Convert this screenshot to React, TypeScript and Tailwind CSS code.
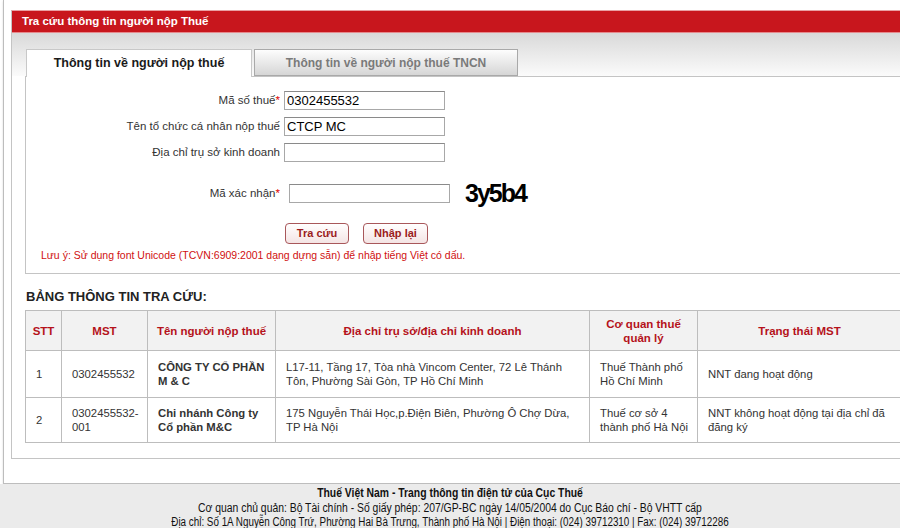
import React from 'react';

const rows = [
  {
    stt: '1',
    mst: ['0302455532'],
    name: ['CÔNG TY CỔ PHẦN', 'M & C'],
    addr: ['L17-11, Tầng 17, Tòa nhà Vincom Center, 72 Lê Thánh', 'Tôn, Phường Sài Gòn, TP Hồ Chí Minh'],
    cq: ['Thuế Thành phố', 'Hồ Chí Minh'],
    tt: ['NNT đang hoạt động'],
    h: 'h-[47px]',
  },
  {
    stt: '2',
    mst: ['0302455532-', '001'],
    name: ['Chi nhánh Công ty', 'Cổ phần M&C'],
    addr: ['175 Nguyễn Thái Học,p.Điện Biên, Phường Ô Chợ Dừa,', 'TP Hà Nội'],
    cq: ['Thuế cơ sở 4', 'thành phố Hà Nội'],
    tt: ['NNT không hoạt động tại địa chỉ đã', 'đăng ký'],
    h: 'h-[45px]',
  },
];

function Lines({ items }: { items: string[] }) {
  return (
    <>
      {items.map((t, i) => (
        <span key={i} className="block whitespace-nowrap">
          {t}
        </span>
      ))}
    </>
  );
}

function Field({ label, req, value, wide }: { label: string; req?: boolean; value?: string; wide?: boolean }) {
  return (
    <div className="flex items-center h-[19px]">
      <div className="w-[254px] text-right text-[11.5px] text-[#333]">
        {label}
        {req && <span className="text-[#d00]">*</span>}
      </div>
      <input
        readOnly
        defaultValue={value}
        className={`${wide ? 'ml-[9px]' : 'ml-[4px]'} w-[161px] h-[19px] border border-[#a8a8a8] border-t-[#8a8a8a] bg-white px-[2px] text-[13px] text-black outline-none`}
      />
    </div>
  );
}

export default function App() {
  return (
    <div className="w-[900px] h-[528px] overflow-hidden bg-white text-[#333] font-['Liberation_Sans',Arial,sans-serif]">
      <div className="ml-[3px] w-[960px] h-[484px] border-l border-b border-[#bdbdbd] pl-[7px] pt-[10px] shadow-[0_1px_2px_rgba(0,0,0,0.15)]">
        <div className="w-[920px] h-[449px] border border-[#c4c4c4] border-t-[#e9a0a3] bg-white">
          {/* red title bar */}
          <div className="h-[22px] bg-[#c8161d] border-b border-[#e58a8d] flex items-center pl-[10px] text-[11.5px] font-bold text-white">
            Tra cứu thông tin người nộp Thuế
          </div>

          {/* tabs */}
          <div className="h-[43px] bg-gradient-to-b from-[#d9d9d9] to-[#fbfbfb] flex items-end pl-[14px]">
            <div className="relative z-10 -mb-px w-[226px] h-[28px] bg-white border border-b-0 border-[#c8c8c8] flex items-center justify-center text-[12.5px] font-bold text-[#1a1a1a]">
              Thông tin về người nộp thuế
            </div>
            <div className="ml-[2px] w-[264px] h-[27px] bg-gradient-to-b from-[#fdfdfd] to-[#d6d6d6] border border-[#a9a9a9] flex items-center justify-center text-[12px] font-bold text-[#7a7a7a]">
              Thông tin về người nộp thuế TNCN
            </div>
          </div>

          {/* form */}
          <div className="ml-[13px] w-[900px] h-[198px] border border-[#c4c4c4] pt-[14px]">
            <div className="flex flex-col gap-[7px]">
              <Field label="Mã số thuế" req value="0302455532" />
              <Field label="Tên tổ chức cá nhân nộp thuế" value="CTCP MC" />
              <Field label="Địa chỉ trụ sở kinh doanh" />
            </div>
            <div className="mt-[19px] flex items-center">
              <Field label="Mã xác nhận" req wide />
              <span className="ml-[15px] text-[25px] font-bold tracking-[-2px] text-black leading-none">3y5b4</span>
            </div>
            <div className="mt-[17px] pl-[259px] flex gap-[14px]">
              <button className="w-[64px] h-[21px] rounded-[4px] border border-[#a8575a] bg-gradient-to-b from-white to-[#f4e4e4] text-[11px] font-bold text-[#9b1c20]">
                Tra cứu
              </button>
              <button className="w-[65px] h-[21px] rounded-[4px] border border-[#a8575a] bg-gradient-to-b from-white to-[#f4e4e4] text-[11px] font-bold text-[#9b1c20]">
                Nhập lại
              </button>
            </div>
            <p className="mt-[4px] pl-[15px] text-[10.5px] text-[#d01010]">
              Lưu ý: Sử dụng font Unicode (TCVN:6909:2001 dạng dựng sẵn) để nhập tiếng Việt có dấu.
            </p>
          </div>

          {/* results */}
          <h3 className="ml-[14px] mt-[13px] mb-[4px] text-[13px] font-bold text-[#222] leading-[19px]">
            BẢNG THÔNG TIN TRA CỨU:
          </h3>
          <table className="ml-[13px] w-[876px] table-fixed border-collapse text-[11.3px] leading-[14px]">
            <colgroup>
              <col className="w-[36px]" />
              <col className="w-[86px]" />
              <col className="w-[128px]" />
              <col className="w-[314px]" />
              <col className="w-[108px]" />
              <col className="w-[204px]" />
            </colgroup>
            <thead>
              <tr className="h-[40px] bg-[#f2f2f2] text-[#b5121b] font-bold text-[11.5px]">
                <th className="border border-[#bdbdbd] text-center">STT</th>
                <th className="border border-[#bdbdbd] text-center">MST</th>
                <th className="border border-[#bdbdbd] text-center">Tên người nộp thuế</th>
                <th className="border border-[#bdbdbd] text-center">Địa chỉ trụ sở/địa chỉ kinh doanh</th>
                <th className="border border-[#bdbdbd] text-center">
                  Cơ quan thuế
                  <br />
                  quản lý
                </th>
                <th className="border border-[#bdbdbd] text-center">Trạng thái MST</th>
              </tr>
            </thead>
            <tbody className="text-[#333]">
              {rows.map((r) => (
                <tr key={r.stt} className={r.h}>
                  <td className="border border-[#bdbdbd] px-[10px] align-middle">{r.stt}</td>
                  <td className="border border-[#bdbdbd] px-[10px] align-middle">
                    <Lines items={r.mst} />
                  </td>
                  <td className="border border-[#bdbdbd] px-[10px] align-middle font-bold">
                    <Lines items={r.name} />
                  </td>
                  <td className="border border-[#bdbdbd] px-[10px] align-middle">
                    <Lines items={r.addr} />
                  </td>
                  <td className="border border-[#bdbdbd] px-[10px] align-middle">
                    <Lines items={r.cq} />
                  </td>
                  <td className="border border-[#bdbdbd] px-[10px] align-middle">
                    <Lines items={r.tt} />
                  </td>
                </tr>
              ))}
            </tbody>
          </table>
        </div>
      </div>

      {/* footer */}
      <div className="h-[44px] bg-[#ebebeb] pt-[2px] text-center text-[12px] leading-[14.5px] text-[#111]">
        <div className="font-bold scale-x-[0.865]">Thuế Việt Nam - Trang thông tin điện tử của Cục Thuế</div>
        <div className="scale-x-[0.865]">Cơ quan chủ quản: Bộ Tài chính - Số giấy phép: 207/GP-BC ngày 14/05/2004 do Cục Báo chí - Bộ VHTT cấp</div>
        <div className="scale-x-[0.82]">Địa chỉ: Số 1A Nguyễn Công Trứ, Phường Hai Bà Trưng, Thành phố Hà Nội | Điện thoại: (024) 39712310 | Fax: (024) 39712286</div>
      </div>
    </div>
  );
}
